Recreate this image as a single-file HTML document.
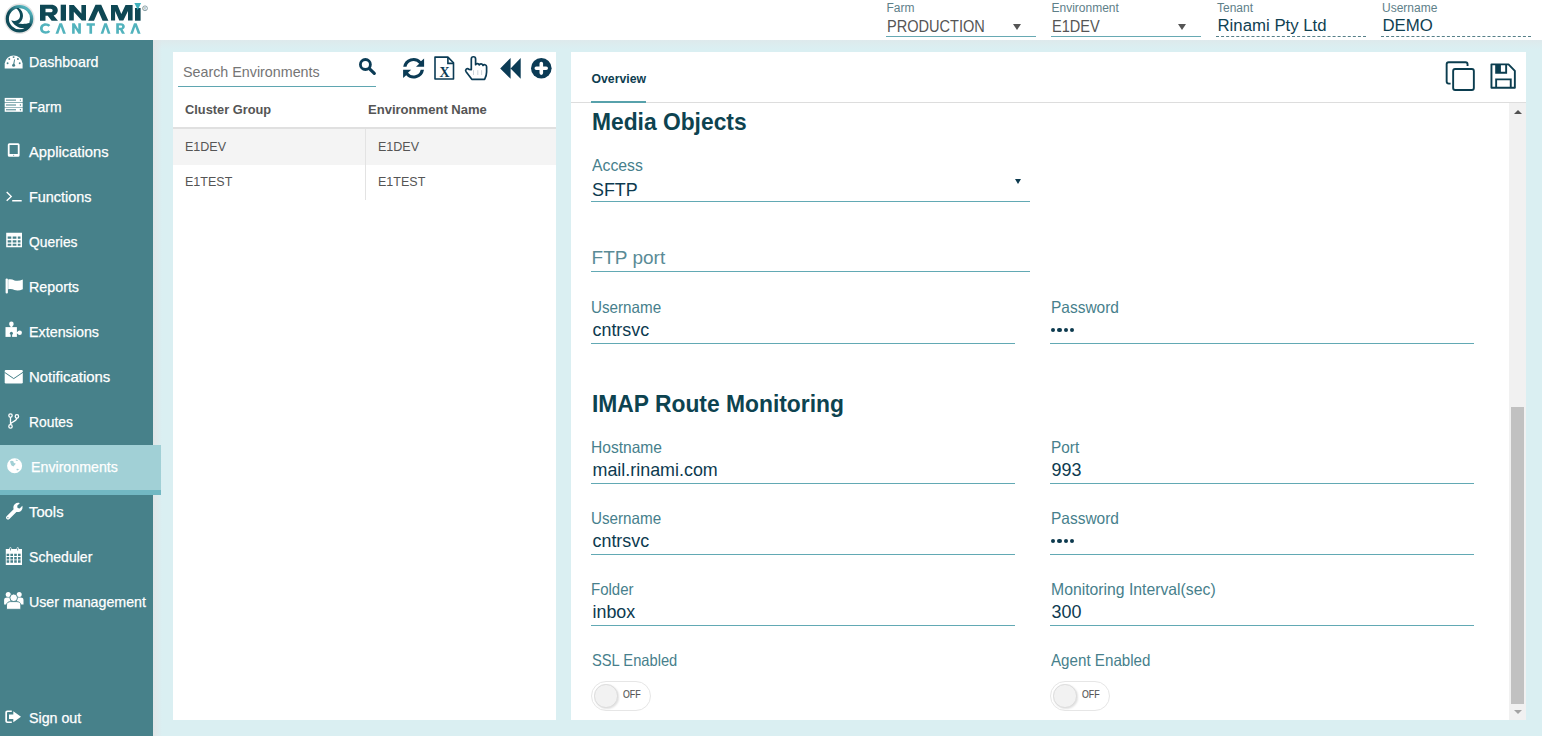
<!DOCTYPE html>
<html><head><meta charset="utf-8">
<style>
*{box-sizing:border-box;margin:0;padding:0}
html,body{width:1542px;height:736px;overflow:hidden}
body{background:#daeff2;font-family:"Liberation Sans",sans-serif;position:relative}
.a{position:absolute;white-space:nowrap}
svg.a{overflow:visible}
</style></head><body>
<div class="a" style="left:0px;top:0px;width:1542px;height:40px;background:#fff;"></div>
<svg class="a" style="left:0;top:0" width="160" height="40" viewBox="0 0 160 40">
<defs><linearGradient id="lg" x1="0.2" y1="0.9" x2="0.8" y2="0.1"><stop offset="0.45" stop-color="#0f4b58"/><stop offset="1" stop-color="#52b2bc"/></linearGradient></defs>
<circle cx="19.5" cy="18.75" r="14.3" fill="none" stroke="#e3e3e3" stroke-width="1.8"/>
<circle cx="19.5" cy="18.75" r="12.2" fill="#fff" stroke="url(#lg)" stroke-width="3.2"/>
<path d="M16 8.1 L18.6 8.1 C21.6 10 23.1 13 23 15.9 C22.9 19.5 20.7 22.4 18.3 23.6 C22 24.3 26.5 24 29.3 23.1 L31.5 25 L26.5 30.5 L24.9 28.1 C19.5 28.8 13.8 25.5 11.2 20.2 C14 21.5 17.6 21.1 19.3 18.6 C20.7 16.4 20.5 12.2 16 8.1 Z" fill="#0f4b58"/>
<g fill="#0e4754">
<path d="M40 4.7 H51 C55.5 4.7 57.8 7.2 57.8 10.3 C57.8 13 56.2 14.8 53.6 15.4 L58 20.7 H51.6 L47.8 15.8 H45.5 V20.7 H40 Z M45.5 8.7 V12.3 H50.5 C52 12.3 52.6 11.5 52.6 10.5 C52.6 9.5 52 8.7 50.5 8.7 Z"/>
<rect x="60.7" y="4.7" width="5.3" height="16"/>
<path d="M69.2 5 H73.8 L81.4 13.5 V5 H86 V20.5 H81.7 L73.8 11.8 V20.5 H69.2 Z"/>
<path d="M95.5 4.7 H101.2 L108.4 20.7 H102.6 L98.3 10.8 L94 20.7 H88.2 Z"/>
<path d="M111 5 H117.5 L121.3 14 L125.5 5 H132.6 V20.5 H128 V11 L123.3 20.5 H119.3 L115.1 11 V20.5 H111 Z"/>
<rect x="135" y="8" width="5.6" height="12.7"/>
</g>
<path d="M134.4 3.1 H141.1 L137.75 9.9 Z" fill="#3fb0bc"/>
<circle cx="145" cy="8.3" r="2.4" fill="none" stroke="#6f8a90" stroke-width="0.8"/>
<text x="143.6" y="9.6" font-size="3.6" font-family="Liberation Sans" fill="#6f8a90">R</text>
<g fill="#52b3bd">
<path d="M50.3 25.2 C49.2 24 47.6 23.3 45.6 23.3 C42.3 23.3 40 25.6 40 28.5 C40 31.4 42.3 33.7 45.6 33.7 C47.6 33.7 49.2 33 50.3 31.8 L48.4 30.2 C47.7 31 46.8 31.3 45.7 31.3 C43.9 31.3 42.7 30.1 42.7 28.5 C42.7 26.9 43.9 25.7 45.7 25.7 C46.8 25.7 47.7 26 48.4 26.8 Z"/>
<path d="M59.4 23.3 H62 L65.9 33.7 H63.1 L60.7 26.8 L58.3 33.7 H55.5 Z"/>
<path d="M72.1 23.3 H74.7 L78.3 29.2 V23.3 H80.9 V33.7 H78.4 L74.7 27.7 V33.7 H72.1 Z"/>
<path d="M86.6 23.3 H94.9 V25.7 H92.1 V33.7 H89.4 V25.7 H86.6 Z"/>
<path d="M104.3 23.3 H106.8 L110.5 33.7 H107.8 L105.55 26.8 L103.3 33.7 H100.6 Z"/>
<path d="M116.2 23.3 H121 C123.4 23.3 124.8 24.7 124.8 26.6 C124.8 28 124 29.1 122.6 29.5 L125 33.7 H122 L120 29.9 H118.9 V33.7 H116.2 Z M118.9 25.6 V27.7 H120.8 C121.6 27.7 122.1 27.3 122.1 26.65 C122.1 26 121.6 25.6 120.8 25.6 Z"/>
<path d="M134 23.3 H136.6 L140.6 33.7 H137.8 L135.3 26.8 L132.9 33.7 H130.2 Z"/>
</g>
</svg>
<div class="a" style="left:886.50px;top:1.64px;font-size:12px;line-height:12px;color:#5e8089;">Farm</div>
<div class="a" style="left:886.50px;top:18.56px;font-size:16px;line-height:16px;color:#555;transform:scaleX(0.91);transform-origin:0 0;">PRODUCTION</div>
<div class="a" style="left:1013px;top:24px;width:0;height:0;border-left:4px solid transparent;border-right:4px solid transparent;border-top:6px solid #555"></div>
<div class="a" style="left:886px;top:36px;width:150px;height:1px;background:#67a9b3;"></div>
<div class="a" style="left:1051.50px;top:1.64px;font-size:12px;line-height:12px;color:#5e8089;">Environment</div>
<div class="a" style="left:1051.50px;top:18.56px;font-size:16px;line-height:16px;color:#555;transform:scaleX(0.91);transform-origin:0 0;">E1DEV</div>
<div class="a" style="left:1178px;top:24px;width:0;height:0;border-left:4px solid transparent;border-right:4px solid transparent;border-top:6px solid #555"></div>
<div class="a" style="left:1051px;top:36px;width:150px;height:1px;background:#67a9b3;"></div>
<div class="a" style="left:1217.00px;top:1.64px;font-size:12px;line-height:12px;color:#5e8089;">Tenant</div>
<div class="a" style="left:1217.50px;top:18.28px;font-size:16.8px;line-height:16.8px;color:#0f4152;">Rinami Pty Ltd</div>
<div class="a" style="left:1216px;top:36px;width:150px;height:0;border-top:1px dashed #557f88"></div>
<div class="a" style="left:1382.00px;top:1.64px;font-size:12px;line-height:12px;color:#5e8089;">Username</div>
<div class="a" style="left:1382.50px;top:18.28px;font-size:16.8px;line-height:16.8px;color:#0f4152;">DEMO</div>
<div class="a" style="left:1381px;top:36px;width:150px;height:0;border-top:1px dashed #557f88"></div>
<div class="a" style="left:0px;top:40px;width:153px;height:696px;background:#47818a;"></div>
<div class="a" style="left:153px;top:40px;width:9px;height:696px;background:linear-gradient(to right,#e1e5e7,#daeff2)"></div>
<div class="a" style="left:153px;top:40px;width:1389px;height:9px;background:linear-gradient(to bottom,rgba(225,229,231,0.55),rgba(218,239,242,0))"></div>
<div class="a" style="left:0px;top:445px;width:161px;height:45px;background:#a1d0d6;"></div>
<div class="a" style="left:0px;top:490px;width:161px;height:5px;background:#72b8c3;"></div>
<div class="a" style="left:29.30px;top:55.03px;font-size:14.5px;line-height:14.5px;color:#fff;transform:scaleX(0.98);transform-origin:0 0;-webkit-text-stroke:0.25px #fff;">Dashboard</div>
<div class="a" style="left:29.30px;top:100.03px;font-size:14.5px;line-height:14.5px;color:#fff;transform:scaleX(0.96);transform-origin:0 0;-webkit-text-stroke:0.25px #fff;">Farm</div>
<div class="a" style="left:29.30px;top:145.03px;font-size:14.5px;line-height:14.5px;color:#fff;transform:scaleX(1.017);transform-origin:0 0;-webkit-text-stroke:0.25px #fff;">Applications</div>
<div class="a" style="left:29.30px;top:190.03px;font-size:14.5px;line-height:14.5px;color:#fff;transform:scaleX(0.995);transform-origin:0 0;-webkit-text-stroke:0.25px #fff;">Functions</div>
<div class="a" style="left:29.30px;top:235.03px;font-size:14.5px;line-height:14.5px;color:#fff;transform:scaleX(0.956);transform-origin:0 0;-webkit-text-stroke:0.25px #fff;">Queries</div>
<div class="a" style="left:29.30px;top:280.03px;font-size:14.5px;line-height:14.5px;color:#fff;transform:scaleX(0.985);transform-origin:0 0;-webkit-text-stroke:0.25px #fff;">Reports</div>
<div class="a" style="left:29.30px;top:325.03px;font-size:14.5px;line-height:14.5px;color:#fff;transform:scaleX(0.987);transform-origin:0 0;-webkit-text-stroke:0.25px #fff;">Extensions</div>
<div class="a" style="left:29.30px;top:370.03px;font-size:14.5px;line-height:14.5px;color:#fff;transform:scaleX(1.029);transform-origin:0 0;-webkit-text-stroke:0.25px #fff;">Notifications</div>
<div class="a" style="left:29.30px;top:415.03px;font-size:14.5px;line-height:14.5px;color:#fff;transform:scaleX(0.954);transform-origin:0 0;-webkit-text-stroke:0.25px #fff;">Routes</div>
<div class="a" style="left:31.10px;top:460.03px;font-size:14.5px;line-height:14.5px;color:#fff;transform:scaleX(0.98);transform-origin:0 0;-webkit-text-stroke:0.25px #fff;">Environments</div>
<div class="a" style="left:29.30px;top:505.03px;font-size:14.5px;line-height:14.5px;color:#fff;transform:scaleX(1.02);transform-origin:0 0;-webkit-text-stroke:0.25px #fff;">Tools</div>
<div class="a" style="left:29.30px;top:550.03px;font-size:14.5px;line-height:14.5px;color:#fff;transform:scaleX(0.97);transform-origin:0 0;-webkit-text-stroke:0.25px #fff;">Scheduler</div>
<div class="a" style="left:29.30px;top:595.03px;font-size:14.5px;line-height:14.5px;color:#fff;transform:scaleX(0.98);transform-origin:0 0;-webkit-text-stroke:0.25px #fff;">User management</div>
<div class="a" style="left:29.20px;top:710.53px;font-size:14.5px;line-height:14.5px;color:#fff;transform:scaleX(0.982);transform-origin:0 0;-webkit-text-stroke:0.25px #fff;">Sign out</div>
<svg class="a" style="left:0;top:0" width="30" height="736" viewBox="0 0 30 736">
<g fill="#fff">
<!-- dashboard -->
<path d="M4.7 68.4 L4.7 63.5 A9 9 0 0 1 22.6 63.5 L22.6 68.4 Z"/>
<g fill="#47818a"><circle cx="9.3" cy="59" r="0.95"/><circle cx="13.6" cy="57.1" r="0.95"/><circle cx="17.9" cy="59" r="0.95"/><circle cx="7.6" cy="63.2" r="0.95"/><circle cx="19.7" cy="63.2" r="0.95"/><circle cx="13.6" cy="65.3" r="1.5"/><path d="M13 65 L14.2 59.2 L15 59.4 L14.2 65.3 Z"/></g>
<!-- farm -->
<rect x="4.7" y="97.9" width="18" height="4.3"/><rect x="4.7" y="102.8" width="18" height="4.3"/><rect x="4.7" y="107.6" width="18" height="4.2"/>
<g fill="#47818a"><rect x="6" y="99.6" width="10" height="1"/><rect x="6" y="104.5" width="10" height="1"/><rect x="6" y="109.3" width="10" height="1"/><circle cx="20.4" cy="100.1" r="0.7"/><circle cx="20.4" cy="105" r="0.7"/><circle cx="20.4" cy="109.8" r="0.7"/></g>
<!-- tablet -->
<path fill-rule="evenodd" d="M9.3 143.2 H18.1 A1.5 1.5 0 0 1 19.6 144.7 V155.2 A1.5 1.5 0 0 1 18.1 156.7 H9.3 A1.5 1.5 0 0 1 7.8 155.2 V144.7 A1.5 1.5 0 0 1 9.3 143.2 Z M9.6 145 V153.9 H17.8 V145 Z"/>
<circle cx="13.7" cy="155.3" r="0.5" fill="#47818a"/>
<!-- terminal -->
<path d="M6.2 192.5 L7.2 191.6 L12.2 196.4 L7.2 201.2 L6.2 200.3 L10.3 196.4 Z"/>
<rect x="12.2" y="200" width="9.5" height="1.5"/>
<!-- table -->
<path fill-rule="evenodd" d="M6.2 232.8 H22 V247.2 H6.2 Z M7.7 236.6 V238.8 H11.3 V236.6 Z M12.7 236.6 V238.8 H16.4 V236.6 Z M17.8 236.6 V238.8 H20.5 V236.6 Z M7.7 240.2 V242.4 H11.3 V240.2 Z M12.7 240.2 V242.4 H16.4 V240.2 Z M17.8 240.2 V242.4 H20.5 V240.2 Z M7.7 243.8 V245.8 H11.3 V243.8 Z M12.7 243.8 V245.8 H16.4 V243.8 Z M17.8 243.8 V245.8 H20.5 V243.8 Z"/>
<!-- flag -->
<rect x="5.6" y="278.4" width="2.3" height="15" rx="1"/>
<path d="M8.2 279.6 C10.5 279 12.5 279.6 14.5 280.4 C17 281.3 20 280.8 22.8 279.6 V289.2 C20 290.4 17 290.8 14.5 289.9 C12.5 289.1 10.5 288.7 8.2 289.3 Z"/>
<!-- puzzle -->
<circle cx="11.4" cy="323.9" r="2.3"/>
<rect x="10.4" y="324.5" width="2" height="3"/>
<path d="M5.5 327.1 H16.9 V336.9 H5.5 Z"/>
<circle cx="11.4" cy="333.3" r="1.5" fill="#47818a"/><rect x="10.7" y="333.3" width="1.4" height="3.7" fill="#47818a"/>
<circle cx="19.7" cy="332.75" r="2.2"/><rect x="16.5" y="331.8" width="2" height="1.9"/>
<!-- envelope -->
<rect x="4.7" y="369.9" width="18.1" height="13.5" rx="1.2"/>
<path d="M4.5 372.3 L13.75 378.6 L23 372.3" fill="none" stroke="#47818a" stroke-width="1"/>
<!-- code fork -->
<g fill="none" stroke="#fff" stroke-width="1.3"><circle cx="10.5" cy="415.6" r="1.7"/><circle cx="16.9" cy="416.4" r="1.7"/><circle cx="10.5" cy="426.4" r="1.7"/><path d="M10.5 417.3 V424.7 M16.9 418.1 C16.9 421.5 11.2 421.5 10.6 424"/></g>
<!-- globe -->
<circle cx="14.6" cy="465.8" r="7.5"/>
<g fill="#a1d0d6"><path d="M10 461.5 C11 460.5 12.5 460.5 13.5 461.2 C13 462.5 14.5 463.5 15.8 463.4 C15.5 464.8 14 465 13.5 466.5 C12.5 466 11.2 465.5 10.8 464 Z"/><path d="M16.5 469 C17.5 468.6 18.5 469 19 469.6 C18.3 470.3 17.3 470.6 16.7 470.3 Z"/><path d="M15.5 460 C16.5 459.6 17.8 460 18 460.8 C17 461 16 460.8 15.5 460 Z"/></g>
<!-- wrench -->
<path d="M6.6 516.2 L13.6 509.2 C13 507 13.6 505 15 503.9 C16.4 502.8 18.3 502.6 19.8 503.2 L17.2 505.8 L17.6 507.9 L19.7 508.4 L22.3 505.8 C22.8 507.4 22.5 509.2 21.4 510.5 C20.2 511.9 18.2 512.4 16.4 511.9 L9.4 519 C8.6 519.8 7.4 519.8 6.6 519 C5.8 518.2 5.8 517 6.6 516.2 Z"/>
<circle cx="7.9" cy="517.7" r="0.6" fill="#47818a"/>
<!-- calendar -->
<path fill-rule="evenodd" d="M5.8 549 H22 V564.9 H5.8 Z M6.6 553.7 V556.1 H9.2 V553.7 Z M6.6 557.0 V559.4 H9.2 V557.0 Z M6.6 560.3 V562.7 H9.2 V560.3 Z M10.4 553.7 V556.1 H13.0 V553.7 Z M10.4 557.0 V559.4 H13.0 V557.0 Z M10.4 560.3 V562.7 H13.0 V560.3 Z M14.2 553.7 V556.1 H16.8 V553.7 Z M14.2 557.0 V559.4 H16.8 V557.0 Z M14.2 560.3 V562.7 H16.8 V560.3 Z M18.0 553.7 V556.1 H20.6 V553.7 Z M18.0 557.0 V559.4 H20.6 V557.0 Z M18.0 560.3 V562.7 H20.6 V560.3 Z"/>
<rect x="9.4" y="547.3" width="2" height="3.5" rx="1"/><rect x="16.7" y="547.3" width="2" height="3.5" rx="1"/>
<rect x="10" y="548" width="0.8" height="2.5" fill="#47818a"/><rect x="17.3" y="548" width="0.8" height="2.5" fill="#47818a"/>
<!-- users -->
<circle cx="8.2" cy="594.4" r="2.5"/><circle cx="19.2" cy="594.4" r="2.5"/>
<path d="M4.1 604.5 V600 C4.1 598.3 5.5 597.6 7 597.6 H10.5 V604.5 Z"/><path d="M23.5 604.5 V600 C23.5 598.3 22.1 597.6 20.6 597.6 H17 V604.5 Z"/>
<circle cx="13.7" cy="597.8" r="3.8" stroke="#47818a" stroke-width="0.9"/>
<path d="M6.5 609.3 V605 C6.5 602.7 8.5 601.6 10.5 601.6 H16.8 C18.8 601.6 20.8 602.7 20.8 605 V609.3 Z" stroke="#47818a" stroke-width="0.9"/>
<!-- sign out -->
<path fill-rule="evenodd" d="M7.3 710.5 H11.8 V712.1 H7.8 C7.3 712.1 7 712.4 7 712.9 V720.7 C7 721.2 7.3 721.5 7.8 721.5 H11.8 V723.1 H7.3 C6.1 723.1 5.3 722.3 5.3 721.1 V712.5 C5.3 711.3 6.1 710.5 7.3 710.5 Z"/>
<path d="M9 714.6 H13.3 V711.3 L21 716.8 L13.3 722.3 V719 H9 Z"/>
</g>
</svg>
<div class="a" style="left:173px;top:52px;width:383px;height:668px;background:#fff;"></div>
<div class="a" style="left:183.00px;top:64.50px;font-size:14.3px;line-height:14.3px;color:#757575;">Search Environments</div>
<div class="a" style="left:178px;top:86px;width:198px;height:1px;background:#5fa6b1;"></div>
<svg class="a" style="left:0;top:0" width="560" height="90" viewBox="0 0 560 90">
<g fill="none" stroke="#0b3b55">
<circle cx="365.4" cy="64.5" r="5" stroke-width="2.8"/>
<path d="M369.6 68.8 L374.3 73.4" stroke-width="3.2" stroke-linecap="round"/>
<path d="M435 57.1 H447.9 L453.5 62.7 V79 H435 Z" stroke-width="1.6" stroke-linejoin="round"/>
<path d="M447.9 57.1 V63.4 H453.5" stroke-width="1.6"/>
<path d="M471.3 69.6 V59 C471.3 56 475.6 56 475.6 59 V64.7 C476 63 478.7 63.2 479.3 65 C479.8 63.4 482.6 63.5 483 65.5 C483.7 64.2 486.6 64.3 486.6 66.7 V72 C486.6 74.5 485.6 77.5 484.6 79.3 H471.8 L466.1 71.8 C464.7 69.8 467 67.6 469 69.3 Z" stroke-width="1.7" stroke-linejoin="round"/>
<path d="M473.5 70.2 V75 M477.8 70.2 V75 M481.6 70.2 V75" stroke-width="0.5" stroke="#9aa9b5"/>
</g>
<g fill="#0b3b55">
<path d="M403.2 66.8 A10.4 10.4 0 0 1 421 61.3 L424.1 58.6 V66.8 H416 L419.2 63.8 A7.2 7.2 0 0 0 406.5 66.8 Z"/>
<path d="M424 69.8 A10.4 10.4 0 0 1 406.2 75.3 L403.1 78 V69.8 H411.2 L408 72.8 A7.2 7.2 0 0 0 420.7 69.8 Z"/>
<path d="M500.2 68.4 L510.6 57.9 V68.4 L520.7 57.9 V78.8 L510.6 68.4 V78.8 Z"/>
<circle cx="541.3" cy="68.3" r="10.3"/>
</g>
<path d="M536.3 68.3 H546.2 M541.3 63.6 V73.1" stroke="#fff" stroke-width="3.6" stroke-linecap="round"/>
<text x="439.6" y="77.2" font-family="Liberation Serif" font-size="14" font-weight="bold" fill="#0b3b55">X</text>
</svg>
<div class="a" style="left:185.00px;top:102.50px;font-size:13.7px;line-height:13.7px;color:#555;font-weight:bold;transform:scaleX(0.936);transform-origin:0 0;">Cluster Group</div>
<div class="a" style="left:368.00px;top:102.50px;font-size:13.7px;line-height:13.7px;color:#555;font-weight:bold;transform:scaleX(0.953);transform-origin:0 0;">Environment Name</div>
<div class="a" style="left:173px;top:127px;width:383px;height:2px;background:#e0e0e0;"></div>
<div class="a" style="left:173px;top:129px;width:383px;height:35.5px;background:#f4f4f4;"></div>
<div class="a" style="left:365px;top:129px;width:1px;height:71px;background:#e3e3e3;"></div>
<div class="a" style="left:185.00px;top:139.57px;font-size:13.5px;line-height:13.5px;color:#555;transform:scaleX(0.927);transform-origin:0 0;">E1DEV</div>
<div class="a" style="left:378.00px;top:139.57px;font-size:13.5px;line-height:13.5px;color:#555;transform:scaleX(0.927);transform-origin:0 0;">E1DEV</div>
<div class="a" style="left:185.00px;top:175.47px;font-size:13.5px;line-height:13.5px;color:#555;transform:scaleX(0.927);transform-origin:0 0;">E1TEST</div>
<div class="a" style="left:378.00px;top:175.47px;font-size:13.5px;line-height:13.5px;color:#555;transform:scaleX(0.927);transform-origin:0 0;">E1TEST</div>
<div class="a" style="left:571px;top:52px;width:955px;height:668px;background:#fff;"></div>
<div class="a" style="left:591.50px;top:72.93px;font-size:12.25px;line-height:12.25px;color:#0d3d50;font-weight:bold;">Overview</div>
<div class="a" style="left:571px;top:102px;width:955px;height:1px;background:#dddddd;"></div>
<div class="a" style="left:591px;top:101px;width:55px;height:2px;background:#57a1ab;"></div>
<svg class="a" style="left:1440px;top:55px" width="80" height="40" viewBox="1440 55 80 40">
<g fill="none" stroke="#0b3d4f" stroke-width="1.9">
<path d="M1450.6 83.65 H1448.7 A2.1 2.1 0 0 1 1446.65 81.6 V64.3 A2.1 2.1 0 0 1 1448.7 62.2 H1465.5 A2.1 2.1 0 0 1 1467.55 64.3 V66.1"/>
<rect x="1453.15" y="68.95" width="20.7" height="21" rx="2"/>
<path d="M1491.45 64.35 H1508.5 L1514.85 70.9 V87.75 H1491.45 Z" stroke-linejoin="round"/>
<path d="M1496.15 64.35 V72.8 H1506.15 V64.35"/>
<path d="M1496.15 87.75 V79.35 H1510.75 V87.75"/>
</g>
<rect x="1496" y="64" width="4.9" height="8.8" fill="#0b3d4f"/>
</svg>
<div class="a" style="left:1509px;top:103px;width:17px;height:617px;background:#f1f1f1;"></div>
<div class="a" style="left:1511px;top:407px;width:13px;height:297px;background:#c1c1c1;"></div>
<div class="a" style="left:1513.5px;top:109.7px;width:0;height:0;border-left:4px solid transparent;border-right:4px solid transparent;border-bottom:4.5px solid #505050"></div>
<div class="a" style="left:1513.5px;top:709.8px;width:0;height:0;border-left:4px solid transparent;border-right:4px solid transparent;border-top:4.5px solid #a3a3a3"></div>
<div class="a" style="left:591.50px;top:109.68px;font-size:24px;line-height:24px;color:#0d4350;font-weight:bold;transform:scaleX(0.95);transform-origin:0 0;">Media Objects</div>
<div class="a" style="left:591.60px;top:156.93px;font-size:16.5px;line-height:16.5px;color:#477f8c;transform:scaleX(0.957);transform-origin:0 0;">Access</div>
<div class="a" style="left:592.00px;top:182.35px;font-size:17.9px;line-height:17.9px;color:#0d3a4f;">SFTP</div>
<div class="a" style="left:1014.5px;top:179px;width:0;height:0;border-left:3.3px solid transparent;border-right:3.3px solid transparent;border-top:5.6px solid #0d3a4f"></div>
<div class="a" style="left:591px;top:201px;width:439px;height:1px;background:#62a9b4;"></div>
<div class="a" style="left:591.60px;top:247.92px;font-size:19px;line-height:19px;color:#5a8b96;">FTP port</div>
<div class="a" style="left:591px;top:271px;width:439px;height:1px;background:#62a9b4;"></div>
<div class="a" style="left:591.30px;top:298.93px;font-size:16.5px;line-height:16.5px;color:#477f8c;transform:scaleX(0.922);transform-origin:0 0;">Username</div>
<div class="a" style="left:592.50px;top:321.85px;font-size:17.9px;line-height:17.9px;color:#0d3a4f;">cntrsvc</div>
<div class="a" style="left:591px;top:343px;width:424px;height:1px;background:#62a9b4;"></div>
<div class="a" style="left:1050.50px;top:298.93px;font-size:16.5px;line-height:16.5px;color:#477f8c;transform:scaleX(0.938);transform-origin:0 0;">Password</div>
<div class="a" style="left:1051.2px;top:327.9px;width:4.2px;height:4.2px;border-radius:50%;background:#0d3a4f"></div>
<div class="a" style="left:1057.4px;top:327.9px;width:4.2px;height:4.2px;border-radius:50%;background:#0d3a4f"></div>
<div class="a" style="left:1063.6px;top:327.9px;width:4.2px;height:4.2px;border-radius:50%;background:#0d3a4f"></div>
<div class="a" style="left:1069.8px;top:327.9px;width:4.2px;height:4.2px;border-radius:50%;background:#0d3a4f"></div>
<div class="a" style="left:1050px;top:343px;width:424px;height:1px;background:#62a9b4;"></div>
<div class="a" style="left:591.50px;top:391.78px;font-size:24px;line-height:24px;color:#0d4350;font-weight:bold;transform:scaleX(0.951);transform-origin:0 0;">IMAP Route Monitoring</div>
<div class="a" style="left:591.30px;top:438.83px;font-size:16.5px;line-height:16.5px;color:#477f8c;transform:scaleX(0.944);transform-origin:0 0;">Hostname</div>
<div class="a" style="left:592.50px;top:462.05px;font-size:17.9px;line-height:17.9px;color:#0d3a4f;">mail.rinami.com</div>
<div class="a" style="left:591px;top:483px;width:424px;height:1px;background:#62a9b4;"></div>
<div class="a" style="left:1050.50px;top:438.83px;font-size:16.5px;line-height:16.5px;color:#477f8c;transform:scaleX(0.93);transform-origin:0 0;">Port</div>
<div class="a" style="left:1051.50px;top:462.05px;font-size:17.9px;line-height:17.9px;color:#0d3a4f;">993</div>
<div class="a" style="left:1050px;top:483px;width:424px;height:1px;background:#62a9b4;"></div>
<div class="a" style="left:591.30px;top:509.83px;font-size:16.5px;line-height:16.5px;color:#477f8c;transform:scaleX(0.922);transform-origin:0 0;">Username</div>
<div class="a" style="left:592.50px;top:532.55px;font-size:17.9px;line-height:17.9px;color:#0d3a4f;">cntrsvc</div>
<div class="a" style="left:591px;top:554px;width:424px;height:1px;background:#62a9b4;"></div>
<div class="a" style="left:1050.50px;top:509.83px;font-size:16.5px;line-height:16.5px;color:#477f8c;transform:scaleX(0.938);transform-origin:0 0;">Password</div>
<div class="a" style="left:1051.2px;top:538.6px;width:4.2px;height:4.2px;border-radius:50%;background:#0d3a4f"></div>
<div class="a" style="left:1057.4px;top:538.6px;width:4.2px;height:4.2px;border-radius:50%;background:#0d3a4f"></div>
<div class="a" style="left:1063.6px;top:538.6px;width:4.2px;height:4.2px;border-radius:50%;background:#0d3a4f"></div>
<div class="a" style="left:1069.8px;top:538.6px;width:4.2px;height:4.2px;border-radius:50%;background:#0d3a4f"></div>
<div class="a" style="left:1050px;top:554px;width:424px;height:1px;background:#62a9b4;"></div>
<div class="a" style="left:591.30px;top:580.63px;font-size:16.5px;line-height:16.5px;color:#477f8c;transform:scaleX(0.91);transform-origin:0 0;">Folder</div>
<div class="a" style="left:592.50px;top:603.75px;font-size:17.9px;line-height:17.9px;color:#0d3a4f;">inbox</div>
<div class="a" style="left:591px;top:625px;width:424px;height:1px;background:#62a9b4;"></div>
<div class="a" style="left:1050.50px;top:580.63px;font-size:16.5px;line-height:16.5px;color:#477f8c;transform:scaleX(0.955);transform-origin:0 0;">Monitoring Interval(sec)</div>
<div class="a" style="left:1051.50px;top:603.75px;font-size:17.9px;line-height:17.9px;color:#0d3a4f;">300</div>
<div class="a" style="left:1050px;top:625px;width:424px;height:1px;background:#62a9b4;"></div>
<div class="a" style="left:592.00px;top:652.13px;font-size:16.5px;line-height:16.5px;color:#477f8c;transform:scaleX(0.891);transform-origin:0 0;">SSL Enabled</div>
<div class="a" style="left:1050.80px;top:652.13px;font-size:16.5px;line-height:16.5px;color:#477f8c;transform:scaleX(0.919);transform-origin:0 0;">Agent Enabled</div>
<div class="a" style="left:591.4px;top:681px;width:59.5px;height:30px;border-radius:15px;background:#fff;border:1px solid #e6e6e6"></div>
<div class="a" style="left:594.0px;top:684px;width:23.6px;height:23.6px;border-radius:50%;background:#f2f2f2;border:1px solid #dcdcdc;box-shadow:1px 1px 2px rgba(0,0,0,0.12)"></div>
<div class="a" style="left:622.70px;top:690.18px;font-size:10.3px;line-height:10.3px;color:#555;transform:scaleX(0.85);transform-origin:0 0;-webkit-text-stroke:0.15px #555;">OFF</div>
<div class="a" style="left:1050.4px;top:681px;width:59.5px;height:30px;border-radius:15px;background:#fff;border:1px solid #e6e6e6"></div>
<div class="a" style="left:1053.0px;top:684px;width:23.6px;height:23.6px;border-radius:50%;background:#f2f2f2;border:1px solid #dcdcdc;box-shadow:1px 1px 2px rgba(0,0,0,0.12)"></div>
<div class="a" style="left:1081.70px;top:690.18px;font-size:10.3px;line-height:10.3px;color:#555;transform:scaleX(0.85);transform-origin:0 0;-webkit-text-stroke:0.15px #555;">OFF</div>
</body></html>
